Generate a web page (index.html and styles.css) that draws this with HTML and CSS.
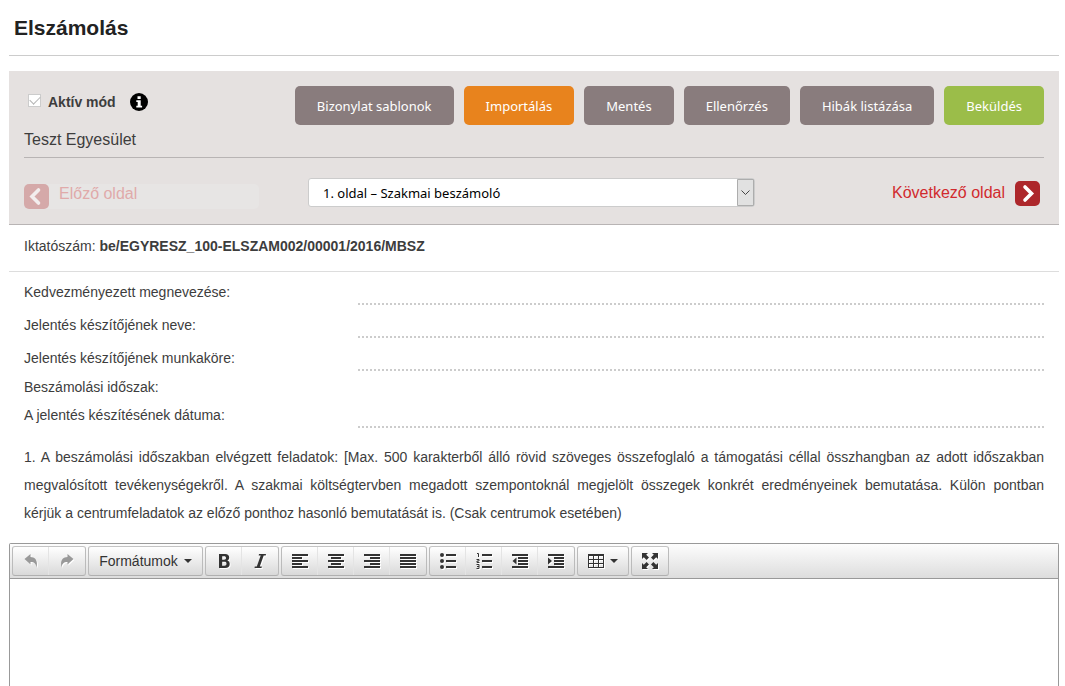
FILE: index.html
```html
<!DOCTYPE html>
<html lang="hu">
<head>
<meta charset="utf-8">
<title>Elszámolás</title>
<link rel="stylesheet" href="styles.css">
</head>
<body>
<h1 class="page-title">Elszámolás</h1>
<section class="panel">
  <div class="panel-top">
    <div class="panel-info">
      <div class="mode">
        <input class="mode-check" type="checkbox" id="active-mode" checked disabled>
        <label class="mode-label" for="active-mode">Aktív mód</label>
        <svg class="info-icon" viewBox="0 0 18 18" aria-hidden="true"><circle cx="9" cy="9" r="9"/><path fill="#fff" d="M7.5 3.3h3.2v2.6H7.5zM6.3 7.2h4.4v5.6h1.4v1.8H6.3v-1.8h1.4V9H6.3z"/></svg>
      </div>
      <div class="org">Teszt Egyesület</div>
    </div>
    <div class="actions">
      <button class="btn" type="button">Bizonylat sablonok</button>
      <button class="btn btn-orange" type="button">Importálás</button>
      <button class="btn" type="button">Mentés</button>
      <button class="btn" type="button">Ellenőrzés</button>
      <button class="btn" type="button">Hibák listázása</button>
      <button class="btn btn-green" type="button">Beküldés</button>
    </div>
  </div>
  <div class="pager">
    <button class="pager-prev" type="button" disabled>
      <svg class="pager-icon" viewBox="0 0 25 25" aria-hidden="true"><rect width="25" height="25" rx="5" fill="#d5a9a9"/><path d="M14.5 6 8 12.5l6.500 6.500" fill="none" stroke="#f3eeee" stroke-width="3.600" stroke-linecap="round"/></svg>
      <span class="pager-prev-text">Előző oldal</span>
    </button>
    <div class="page-select-wrap">
      <select class="page-select" aria-label="Oldal"><option>1. oldal – Szakmai beszámoló</option></select>
      <svg class="page-select-arrow" viewBox="0 0 17 27" aria-hidden="true"><path d="M.5.500h16v26H.5z" fill="#e1e1e1" stroke="#adadad"/><path d="m4.500 11.500 4 4 4-4" fill="none" stroke="#444"/></svg>
    </div>
    <a class="pager-next" href="#next">
      <span>Következő oldal</span>
      <svg class="pager-icon" viewBox="0 0 25 25" aria-hidden="true"><rect width="25" height="25" rx="5" fill="#ad272b"/><path d="m10 6 6.500 6.500L10 19" fill="none" stroke="#fff" stroke-width="3.600" stroke-linecap="round"/></svg>
    </a>
  </div>
</section>
<div class="file-number">Iktatószám: <strong>be/EGYRESZ_100-ELSZAM002/00001/2016/MBSZ</strong></div>
<form class="fields">
  <div class="field field-spaced"><label for="f1">Kedvezményezett megnevezése:</label><input id="f1" class="line-input" type="text"></div>
  <div class="field field-spaced"><label for="f2">Jelentés készítőjének neve:</label><input id="f2" class="line-input" type="text"></div>
  <div class="field field-last"><label for="f3">Jelentés készítőjének munkaköre:</label><input id="f3" class="line-input" type="text"></div>
  <div class="field"><span>Beszámolási időszak:</span></div>
  <div class="field"><label for="f4">A jelentés készítésének dátuma:</label><input id="f4" class="line-input" type="text"></div>
</form>
<p class="question">1. A beszámolási időszakban elvégzett feladatok: [Max. 500 karakterből álló rövid szöveges összefoglaló a támogatási céllal összhangban az adott időszakban megvalósított tevékenységekről. A szakmai költségtervben megadott szempontoknál megjelölt összegek konkrét eredményeinek bemutatása. Külön pontban kérjük&nbsp;a centrumfeladatok az előző ponthoz hasonló bemutatását is. (Csak centrumok esetében)</p>
<div class="editor">
  <div class="toolbar" role="toolbar">
    <div class="group">
      <button class="tool tool-off" type="button" disabled aria-label="Visszavonás"><svg class="icon" viewBox="0 0 16 16"><path fill="#999" d="M1.500 6 7.500 1v3c5 .2 7.500 3.500 6 10.500-.4-3.500-2-5.500-6-5.500v2.500z"/></svg></button>
      <button class="tool tool-off" type="button" disabled aria-label="Újra"><svg class="icon" viewBox="0 0 16 16"><path fill="#999" d="M14.500 6 8.500 1v3c-5 .2-7.500 3.500-6 10.500.4-3.500 2-5.500 6-5.500v2.500z"/></svg></button>
    </div>
    <div class="group">
      <button class="tool tool-menu" type="button">Formátumok<svg class="caret" viewBox="0 0 8 4"><path d="M0 0h8L4 4z"/></svg></button>
    </div>
    <div class="group">
      <button class="tool" type="button" aria-label="Félkövér"><svg class="icon" viewBox="0 0 16 16"><path fill-rule="evenodd" d="M3 1h6.200c2.500 0 4 1.300 4 3.500 0 1.500-.7 2.500-1.900 3 1.600.5 2.400 1.700 2.400 3.400 0 2.600-1.700 4.100-4.500 4.100H3zm3.200 2.300v3.400h1.900c1.300 0 1.900-.6 1.900-1.700s-.6-1.700-1.900-1.700zm0 5.500v3.900h2.200c1.400 0 2.100-.7 2.100-2s-.7-1.900-2.100-1.900z"/></svg></button>
      <button class="tool" type="button" aria-label="Dőlt"><svg class="icon" viewBox="0 0 16 16"><path d="M7 1h7l-.3 1.400h-2L7.800 13.600h2L9.500 15H2.500l.3-1.400h2L8.700 2.400h-2z"/></svg></button>
    </div>
    <div class="group">
      <button class="tool" type="button" aria-label="Balra igazítás"><svg class="icon" viewBox="0 0 16 16"><path d="M0 1h16v2H0zM0 4h10v2H0zM0 7h16v2H0zM0 10h10v2H0zM0 13h16v2H0z"/></svg></button>
      <button class="tool" type="button" aria-label="Középre igazítás"><svg class="icon" viewBox="0 0 16 16"><path d="M0 1h16v2H0zM3 4h10v2H3zM0 7h16v2H0zM3 10h10v2H3zM0 13h16v2H0z"/></svg></button>
      <button class="tool" type="button" aria-label="Jobbra igazítás"><svg class="icon" viewBox="0 0 16 16"><path d="M0 1h16v2H0zM6 4h10v2H6zM0 7h16v2H0zM6 10h10v2H6zM0 13h16v2H0z"/></svg></button>
      <button class="tool" type="button" aria-label="Sorkizárt"><svg class="icon" viewBox="0 0 16 16"><path d="M0 1h16v2H0zM0 4h16v2H0zM0 7h16v2H0zM0 10h16v2H0zM0 13h16v2H0z"/></svg></button>
    </div>
    <div class="group">
      <button class="tool" type="button" aria-label="Felsorolás"><svg class="icon" viewBox="0 0 16 16"><path d="M6 1h10v2H6zM6 7h10v2H6zM6 13h10v2H6z"/><circle cx="2" cy="2" r="2"/><circle cx="2" cy="8" r="2"/><circle cx="2" cy="14" r="2"/></svg></button>
      <button class="tool" type="button" aria-label="Számozás"><svg class="icon" viewBox="0 0 16 16"><path d="M6 1h10v2H6zM6 7h10v2H6zM6 13h10v2H6z"/><path d="M1 .500h1.500V4M.5 6.500h2.500v1.500H1v1.500h2.500M.5 11.500h2.500v4H.5M1 13.500h2" fill="none" stroke="#333"/></svg></button>
      <button class="tool" type="button" aria-label="Behúzás csökkentése"><svg class="icon" viewBox="0 0 16 16"><path d="M0 1h16v2H0zM6 4h10v2H6zM6 7h10v2H6zM6 10h10v2H6zM0 13h16v2H0zM4.500 4.500v7L.5 8z"/></svg></button>
      <button class="tool" type="button" aria-label="Behúzás növelése"><svg class="icon" viewBox="0 0 16 16"><path d="M0 1h16v2H0zM6 4h10v2H6zM6 7h10v2H6zM6 10h10v2H6zM0 13h16v2H0zM0 4.500v7L4 8z"/></svg></button>
    </div>
    <div class="group">
      <button class="tool tool-table" type="button" aria-label="Táblázat"><svg class="icon" viewBox="0 0 16 16"><path fill-rule="evenodd" d="M0 1h16v14H0zM1 3v3h4V3zm5 0v3h4V3zm5 0v3h4V3zM1 7v3h4V7zm5 0v3h4V7zm5 0v3h4V7zM1 11v3h4v-3zm5 0v3h4v-3zm5 0v3h4v-3z"/></svg><svg class="caret" viewBox="0 0 8 4"><path d="M0 0h8L4 4z"/></svg></button>
    </div>
    <div class="group">
      <button class="tool" type="button" aria-label="Teljes képernyő"><svg class="icon" viewBox="0 0 16 16"><path d="M0 0h6L4.200 1.800 7 4.600 4.600 7 1.800 4.200 0 6zM16 0v6l-1.800-1.800L11.400 7 9 4.600l2.800-2.800L10 0zM0 16v-6l1.800 1.800L4.600 9 7 11.400l-2.800 2.800L6 16zM16 16h-6l1.800-1.800L9 11.400 11.400 9l2.800 2.800L16 10z"/></svg></button>
    </div>
  </div>
  <textarea class="editor-area" aria-label="Szöveg"></textarea>
</div>
</body>
</html>
```
FILE: styles.css
```css
* { box-sizing: border-box; }
body {
  margin: 0;
  padding: 0 6px 0 9px;
  min-height: 100vh;
  display: flex;
  flex-direction: column;
  background: #fff;
  color: #3d3d3d;
  font: 14px/28px "Liberation Sans", Arial, sans-serif;
}
button, input, select, textarea { font: inherit; color: inherit; }
.page-title {
  margin: 0 0 15px;
  padding: 0 5px;
  height: 56px;
  border-bottom: 1px solid #ccc;
  color: #222;
  font-size: 21px;
  line-height: 56px;
}
.panel {
  padding: 15px 15px 17px;
  background: #e5e1e0;
  border-bottom: 1px solid #b8b4b4;
}
.panel-top {
  display: flex;
  justify-content: space-between;
  border-bottom: 1px solid #b8b4b4;
}
.mode { display: flex; align-items: center; height: 32px; padding-left: 4px; }
.mode-check {
  appearance: none;
  width: 13px;
  height: 13px;
  margin: 0 7px 3px 0;
  border: 1px solid #ccc;
  background: #fff;
  display: grid;
  place-items: center;
}
.mode-check:checked::before {
  content: "";
  width: 9px;
  height: 5px;
  margin-bottom: 3px;
  border: solid #b5b5b5;
  border-width: 0 0 1px 1px;
  transform: rotate(-45deg);
}
.mode-label { font-weight: bold; }
.info-icon { width: 18px; height: 18px; margin-left: 14px; }
.org { padding-top: 4px; font-size: 16px; line-height: 35px; }
.actions { display: flex; gap: 10px; }
.btn {
  height: 39px;
  padding: 0 22px;
  border: 0;
  border-radius: 5px;
  background: #897c7d;
  color: #fff;
  font-family: "Noto Sans", Tahoma, sans-serif;
  font-size: 13px;
}
.btn-orange { background: #e8831d; }
.btn-green { background: #9bbd49; }
.pager {
  display: grid;
  grid-template-columns: 284px minmax(0, 447px) 1fr;
  align-items: start;
  margin-top: 20px;
  height: 29px;
}
.pager-icon { width: 25px; height: 25px; display: block; flex: none; }
.pager-prev {
  display: flex;
  gap: 10px;
  width: 235px;
  height: 25px;
  margin-top: 6px;
  padding: 0;
  border: 0;
  border-radius: 5px;
  background: #e7e5e4;
  color: #e0aaaa;
  font-size: 16px;
  line-height: 20px;
}
.page-select-wrap { display: grid; }
.page-select, .page-select-arrow { grid-area: 1 / 1; }
.page-select {
  appearance: none;
  width: 100%;
  height: 29px;
  padding: 0 30px 0 14px;
  border: 1px solid #ccc;
  border-radius: 3px;
  background: #fff;
  color: #000;
  font-family: "Noto Sans", Tahoma, sans-serif;
  font-size: 13px;
}
.page-select-arrow { width: 17px; height: 27px; margin: 1px; justify-self: end; pointer-events: none; }
.pager-next {
  display: flex;
  justify-content: flex-end;
  align-items: center;
  gap: 10px;
  margin-top: 1px;
  padding-right: 4px;
  color: #d12a2e;
  font-size: 16px;
  text-decoration: none;
}
.file-number { padding: 7px 15px 11px; border-bottom: 1px solid #ddd; }
.fields { padding: 6px 15px 0; }
.field {
  display: grid;
  grid-template-columns: 334px 1fr;
  height: 28px;
}
.field-spaced { margin-bottom: 5px; }
.field-last { margin-bottom: 1px; }
.line-input {
  width: 100%;
  height: 27px;
  padding: 0;
  border: 0;
  border-bottom: 2px dotted #ccc;
  background: transparent;
  outline: 0;
}
.question { margin: 14px 15px 16px; text-align: justify; }
.editor {
  flex: 1;
  display: flex;
  flex-direction: column;
  border: 1px solid #999;
  border-bottom: 0;
  border-radius: 2px 2px 0 0;
}
.toolbar {
  display: flex;
  gap: 2px;
  padding: 2px;
  border-bottom: 1px solid #999;
  background: linear-gradient(#fdfdfd, #ddd);
}
.group {
  display: flex;
  border: 1px solid #bbb;
  border-color: #c4c4c4 #bbb #b0b0b0;
  border-radius: 3px;
  background: linear-gradient(#fff, #d9d9d9);
}
.tool {
  display: flex;
  align-items: center;
  justify-content: center;
  width: 36px;
  height: 28px;
  padding: 0;
  border: 0;
  background: none;
  color: #333;
}
.tool + .tool { box-shadow: -1px 0 #e4e4e4; }
.tool-menu { width: 113px; gap: 6px; }
.tool-table { width: 50px; gap: 6px; }
.icon { width: 16px; height: 16px; fill: #333; filter: drop-shadow(1px 1px 0 #fff); }
.caret { width: 8px; height: 4px; fill: #333; }
.editor-area {
  flex: 1;
  width: 100%;
  padding: 8px;
  border: 0;
  outline: 0;
  resize: none;
  background: #fff;
}
```
